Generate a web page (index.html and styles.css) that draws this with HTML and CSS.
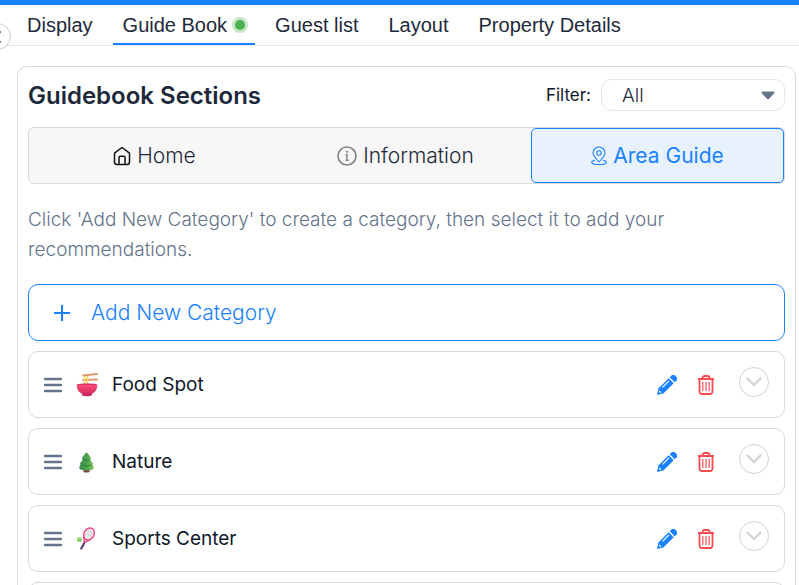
FILE: index.html
```
<!DOCTYPE html>
<html lang="en">
<head>
    <meta charset="utf-8">
    <title>Guide Book</title>
    <meta name="viewport" content="width=device-width, initial-scale=1.0">
    <link rel="stylesheet" href="styles.css">
</head>
<body>
    <!-- shared icons -->
    <svg class="sprite" aria-hidden="true">
        <symbol id="icon-menu" viewBox="0 0 18 16">
            <path d="M1 2h16M1 8h16M1 14h16" fill="none" stroke="#64748b" stroke-width="2.4" stroke-linecap="round"/>
        </symbol>
        <symbol id="icon-pencil" viewBox="0 0 20 20">
            <path d="M11.7 3.3l5 5L6.400 18.600 0 20l1.400-6.400z" fill="#1a82ff"/>
            <path d="M12.700 2.300l1.600-1.600a2.700 2.700 0 0 1 4 0l1 1a2.700 2.700 0 0 1 0 4l-1.600 1.600z" fill="#1a82ff"/>
            <path d="M5.500 12.300l6.500-6.500M2.200 16l1.800 1.800" fill="none" stroke="#fff" stroke-width="1.200"/>
        </symbol>
        <symbol id="icon-trash" viewBox="0 0 18 20">
            <g fill="none" stroke="#fa4b50">
                <path d="M1 4h16M5.500 4V3a2 2 0 0 1 2-2h3a2 2 0 0 1 2 2v1M2.500 4v12.500a2.500 2.500 0 0 0 2.500 2.500h8a2.500 2.500 0 0 0 2.500-2.500V4" stroke-width="1.800"/>
                <path d="M5.800 7v9M9 7v9M12.200 7v9" stroke-width="1.200"/>
            </g>
        </symbol>
        <symbol id="icon-chevron" viewBox="0 0 16 10">
            <path d="M1.500 1.500L8 8l6.500-6.500" fill="none" stroke="#d4d4d4" stroke-width="2.400" stroke-linecap="round"/>
        </symbol>
    </svg>

    <nav class="tabs">
        <button class="collapse" aria-label="Collapse">
            <svg width="8" height="14" viewBox="0 0 8 14"><path d="M5 1.500L-.5 7 5 12.500" fill="none" stroke="#777" stroke-width="1.500"/></svg>
        </button>
        <a href="#display">Display</a>
        <a href="#guide-book" class="active">Guide Book <span class="dot"></span></a>
        <a href="#guest-list">Guest list</a>
        <a href="#layout">Layout</a>
        <a href="#property">Property Details</a>
    </nav>

    <main class="card">
        <div class="card-head">
            <h1>Guidebook Sections</h1>
            <label for="filter">Filter:</label>
            <div class="select">
                <select id="filter">
                    <option>All</option>
                </select>
                <svg class="arrow" width="14" height="9" viewBox="0 0 14 9"><path d="M1.500 1.500h11L7 7.200z" fill="#64748b" stroke="#64748b" stroke-width="2" stroke-linejoin="round"/></svg>
            </div>
        </div>

        <div class="sections">
            <button>
                <svg width="18" height="20" viewBox="0 0 18 20"><path d="M1.500 7.200L9 1.500l7.500 5.700V16a2.500 2.500 0 0 1-2.500 2.500H4A2.500 2.500 0 0 1 1.500 16zM6 18.500v-7.300a1 1 0 0 1 1-1h4a1 1 0 0 1 1 1v7.300" fill="none" stroke="#111" stroke-width="1.500" stroke-linejoin="round"/></svg>
                Home
            </button>
            <button>
                <svg width="20" height="20" viewBox="0 0 20 20"><circle cx="10" cy="10" r="9" fill="none" stroke="#858585" stroke-width="1.700"/><path d="M8.500 8.800H10v5.200M8.500 14.300h3" fill="none" stroke="#858585" stroke-width="1.400"/><circle cx="10" cy="5.800" r="1.100" fill="#858585"/></svg>
                Information
            </button>
            <button class="active">
                <svg width="16" height="20" viewBox="0 0 16 20"><g fill="none" stroke="#1a82ff" stroke-width="1.100"><path d="M8 16C5.500 13 2 10 2 7a6 6 0 0 1 12 0c0 3-3.500 6-6 9z"/><circle cx="8" cy="7" r="2.200"/><path d="M4 14.200c-2 .4-3.300 1-3.300 2 0 1.400 3 2.300 7.300 2.300s7.300-.9 7.300-2.300c0-1-1.300-1.600-3.300-2"/></g></svg>
                Area Guide
            </button>
        </div>

        <p class="hint">Click 'Add New Category' to create a category, then select it to add your recommendations.</p>

        <button class="add">
            <svg width="16" height="16" viewBox="0 0 16 16"><path d="M8 0v16M0 8h16" stroke="#1a82ff" stroke-width="2"/></svg>
            Add New Category
        </button>

        <ul class="categories">
            <li>
                <svg class="drag"><use href="#icon-menu"/></svg>
                <svg class="emoji" viewBox="0 0 22 24">
                    <defs><linearGradient id="bowl" x2="0" y2="1"><stop stop-color="#ff4c7b"/><stop offset="1" stop-color="#c42358"/></linearGradient></defs>
                    <path d="M7 2.500L21 1M7 7l14-.5" stroke="#d99a6c" stroke-width="1.800" stroke-linecap="round"/>
                    <path d="M8.500 3v9M11.500 3v9" stroke="#ffd15c" stroke-width="1.600"/>
                    <ellipse cx="11" cy="12" rx="10" ry="1.600" fill="#a91e4e"/>
                    <path d="M.7 11.500h20.600c0 5-2 7.700-5.300 9.200v1.800q-5 1.500-10 0v-1.800C2.700 19.200.7 16.500.7 11.500z" fill="url(#bowl)"/>
                </svg>
                <span class="name">Food Spot</span>
                <button class="icon edit" aria-label="Edit"><svg><use href="#icon-pencil"/></svg></button>
                <button class="icon delete" aria-label="Delete"><svg><use href="#icon-trash"/></svg></button>
                <button class="toggle" aria-label="Expand"><svg><use href="#icon-chevron"/></svg></button>
            </li>
            <li>
                <svg class="drag"><use href="#icon-menu"/></svg>
                <svg class="emoji" viewBox="0 0 22 24">
                    <defs><linearGradient id="leaf"><stop stop-color="#368c4b"/><stop offset=".55" stop-color="#4ea450"/><stop offset="1" stop-color="#8bc45d"/></linearGradient></defs>
                    <path d="M7.500 18h6v4q-3 1-6 0z" fill="#80413f"/>
                    <path d="M10.500 2.500c1 0 4.500 5 4.500 6.500 0 .6-.4 1-1 1.100 1.400 1.500 3 2.600 3 3.900 0 .5-.4.900-.9 1 1.200.8 1.600 1.700 1.600 2.700 0 1.800-3.200 2.800-7.200 2.800s-7.200-1-7.200-2.800c0-1 .4-1.900 1.600-2.700-.5-.1-.9-.5-.9-1 0-1.300 1.600-2.400 3-3.900-.6-.1-1-.5-1-1.100 0-1.500 3.500-6.500 4.500-6.500z" fill="url(#leaf)"/>
                    <path d="M6.500 10q4 1.500 7.500.1M5 15q6 2 11 0" fill="none" stroke="#2e793e" stroke-width=".7"/>
                </svg>
                <span class="name">Nature</span>
                <button class="icon edit" aria-label="Edit"><svg><use href="#icon-pencil"/></svg></button>
                <button class="icon delete" aria-label="Delete"><svg><use href="#icon-trash"/></svg></button>
                <button class="toggle" aria-label="Expand"><svg><use href="#icon-chevron"/></svg></button>
            </li>
            <li>
                <svg class="drag"><use href="#icon-menu"/></svg>
                <svg class="emoji" viewBox="0 0 22 24">
                    <g transform="rotate(28 13 7)">
                        <ellipse cx="13" cy="7" rx="5" ry="6.300" fill="#f4f2f5" stroke="#f4447f" stroke-width="1.400"/>
                        <path d="M10.500 2.500v9M13 1.500v11M15.500 2.500v9M9 5h8M8.500 8h9" stroke="#c8c2cf" stroke-width=".6"/>
                        <path d="M9.500 12l3.500 4.500 3.500-4.500" fill="none" stroke="#e5387e" stroke-width="1.200"/>
                        <path d="M13 15.500v3" stroke="#d12b80" stroke-width="1.800"/>
                        <path d="M13 18v5.500" stroke="#564374" stroke-width="2.200" stroke-linecap="round"/>
                    </g>
                    <circle cx="3.500" cy="12.500" r="2.500" fill="#8dcc68"/>
                    <path d="M2.200 10.800q1.800 1.400 3.500.7" fill="none" stroke="#d9f3bd" stroke-width=".7"/>
                </svg>
                <span class="name">Sports Center</span>
                <button class="icon edit" aria-label="Edit"><svg><use href="#icon-pencil"/></svg></button>
                <button class="icon delete" aria-label="Delete"><svg><use href="#icon-trash"/></svg></button>
                <button class="toggle" aria-label="Expand"><svg><use href="#icon-chevron"/></svg></button>
            </li>
            <li></li>
        </ul>
    </main>
</body>
</html>
```
FILE: styles.css
```
* {
    box-sizing: border-box;
}
body {
    font-family: Inter, sans-serif;
    background-color: #fff;
    color: #1e293b;
    margin: 0;
    height: 100vh;
    overflow: hidden;
    border-top: 5px solid #1a82ff;
}
button {
    font-family: inherit;
    color: inherit;
    background: none;
    border: none;
    padding: 0;
    cursor: pointer;
}
.sprite {
    display: none;
}
.tabs {
    display: flex;
    gap: 10px;
    height: 41px;
    padding-left: 17px;
    border-bottom: 1px solid #e2e8f0;
    position: relative;
}
.tabs a {
    display: flex;
    align-items: center;
    gap: 8px;
    padding: 2px 10px 0;
    font-family: "Liberation Sans", Arial, sans-serif;
    font-size: 20px;
    color: #1e293b;
    text-decoration: none;
    border-bottom: 2px solid transparent;
}
.tabs a.active {
    border-color: #1a82ff;
}
.dot {
    width: 10px;
    height: 10px;
    border-radius: 50%;
    background-color: #4caf50;
    box-shadow: 0 0 0 3px #c5e5c7;
}
/* sits over the left edge of the window */
.collapse {
    position: absolute;
    left: -16px;
    top: 18px;
    width: 27px;
    height: 27px;
    border: 1px solid #ccc;
    border-radius: 50%;
    background-color: #fff;
}
.collapse svg {
    display: block;
    margin-left: 11px;
}
.card {
    margin: 20px 3px 0 17px;
    padding: 12px 10px;
    border: 1px solid #d9d9d9;
    border-radius: 10px;
}
.card-head {
    display: flex;
    align-items: center;
    gap: 10px;
    margin-bottom: 16px;
}
h1 {
    flex: 1;
    margin: 0;
    font-size: 24px;
    font-weight: 600;
}
.card-head label {
    font-size: 17px;
    font-weight: 400;
    color: #0f172a;
}
.select {
    position: relative;
    width: 184px;
}
.select select {
    display: block;
    width: 100%;
    height: 32px;
    padding: 0 20px;
    appearance: none;
    font-family: inherit;
    font-size: 19px;
    font-weight: 300;
    color: #1e293b;
    background-color: #fff;
    border: 1px solid #e2e8f0;
    border-radius: 10px;
}
.arrow {
    position: absolute;
    right: 10px;
    top: 12px;
    pointer-events: none;
}
.sections {
    display: flex;
    height: 57px;
    background-color: #f7f7f7;
    border: 1px solid #d9d9d9;
    border-radius: 6px;
}
.sections button {
    flex: 1;
    display: flex;
    align-items: center;
    justify-content: center;
    gap: 6px;
    font-size: 21px;
    font-weight: 300;
}
.sections button.active {
    color: #1a82ff;
    font-weight: 400;
    background-color: #e8f2fe;
    border: 1px solid #1a82ff;
    border-radius: 5px;
}
.hint {
    margin: 21px 0 19px;
    font-size: 19px;
    font-weight: 300;
    line-height: 30px;
    color: #64748b;
}
.add {
    display: flex;
    align-items: center;
    gap: 21px;
    width: 100%;
    height: 57px;
    padding: 0 25px;
    font-size: 21px;
    font-weight: 300;
    color: #1a82ff;
    border: 1px solid #1a82ff;
    border-radius: 10px;
}
.categories {
    list-style: none;
    margin: 10px 0 0;
    padding: 0;
    display: flex;
    flex-direction: column;
    gap: 10px;
}
.categories li {
    display: flex;
    align-items: center;
    height: 67px;
    padding: 0 15px;
    border: 1px solid #d9d9d9;
    border-radius: 10px;
}
.drag {
    width: 18px;
    height: 16px;
    margin-right: 14px;
}
.emoji {
    width: 22px;
    height: 24px;
    margin-right: 14px;
}
.name {
    flex: 1;
    font-size: 19px;
    font-weight: 400;
    color: #0f172a;
}
.icon svg {
    display: block;
    width: 20px;
    height: 20px;
}
.delete {
    margin: 0 24px 0 20px;
}
.delete svg {
    width: 18px;
}
.toggle {
    width: 30px;
    height: 30px;
    margin-bottom: 5px;
    border: 1px solid #d4d4d4;
    border-radius: 50%;
}
.toggle svg {
    display: block;
    width: 16px;
    height: 10px;
    margin: auto;
}
```
